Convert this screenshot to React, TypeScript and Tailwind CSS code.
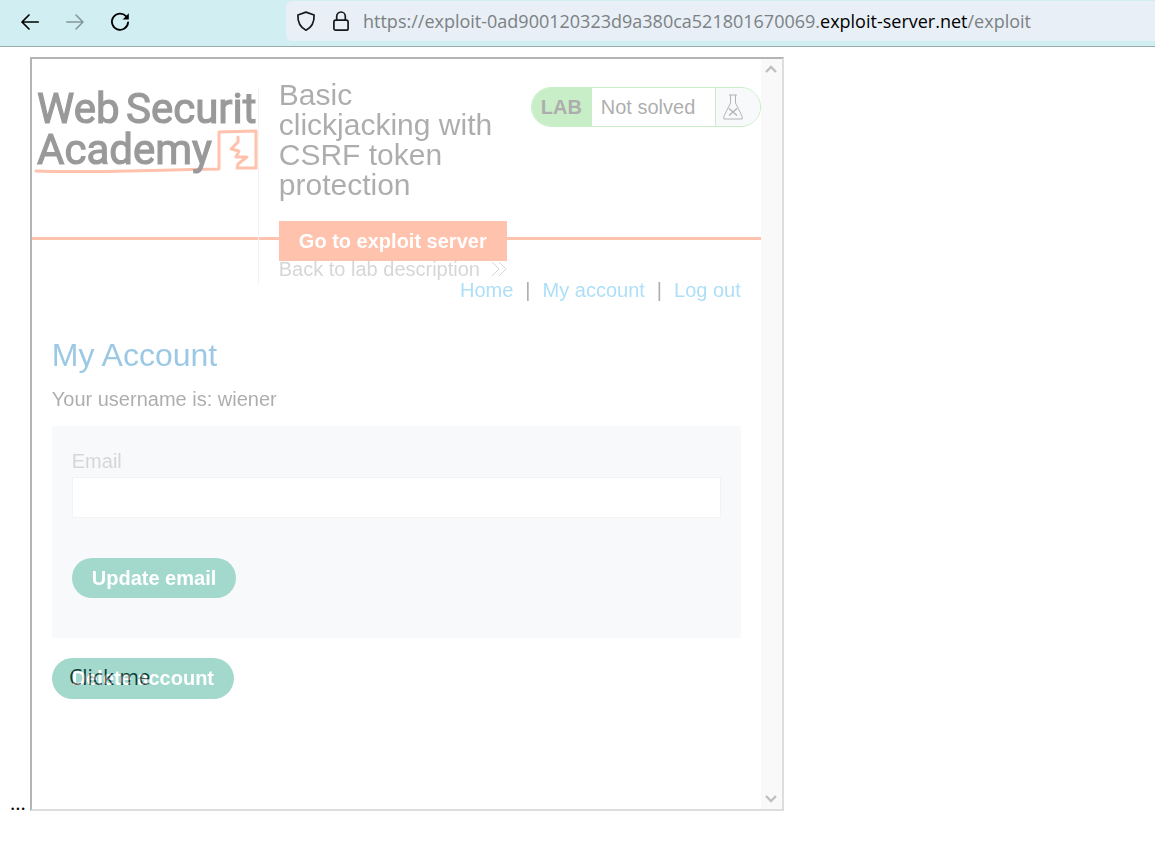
import type { ReactNode } from "react";

function ToolbarButton({ label, disabled, children }: { label: string; disabled?: boolean; children: ReactNode }) {
  return (
    <button type="button" aria-label={label} disabled={disabled} className="flex size-5 items-center justify-center text-black disabled:text-[#849698]">
      {children}
    </button>
  );
}

function BrowserBar() {
  return (
    <header className="flex h-[47px] items-start border-b border-[#9aabae] bg-[#d1eef2]">
      <nav aria-label="Browser" className="flex h-11 w-[286px] shrink-0 items-center gap-[25px] pl-5">
        <ToolbarButton label="Back">
          <svg width="20" height="20" viewBox="0 0 20 20" fill="none" stroke="currentColor" strokeWidth="1.7" strokeLinecap="round" strokeLinejoin="round">
            <path d="M18.2 10H2M9 3 2 10l7 7" />
          </svg>
        </ToolbarButton>
        <ToolbarButton label="Forward" disabled>
          <svg width="20" height="20" viewBox="0 0 20 20" fill="none" stroke="currentColor" strokeWidth="1.5" strokeLinecap="round" strokeLinejoin="round">
            <path d="M1.8 10H18M11 3l7 7-7 7" />
          </svg>
        </ToolbarButton>
        <ToolbarButton label="Reload">
          <svg width="20" height="20" viewBox="0 0 20 20" fill="none" stroke="currentColor" strokeWidth="1.8" strokeLinecap="round">
            <path d="M16 4.2A8.1 8.1 0 1 0 18.1 10.4" />
            <path d="M18.8 1.3v6.2h-6.1z" fill="currentColor" stroke="none" />
          </svg>
        </ToolbarButton>
      </nav>
      <div className="mt-px flex h-10 min-w-0 flex-1 items-center rounded-l-md bg-[#e8eff6] pl-2.5">
        <svg className="shrink-0" width="20" height="22" viewBox="0 0 20 22" fill="none" stroke="#15191b" strokeWidth="1.7" strokeLinejoin="round">
          <path d="M10 2.1 18.1 5c.3 6.9-1.7 12-8.1 15.2C3.6 17 1.6 11.9 1.9 5z" />
        </svg>
        <svg className="ml-[15px] shrink-0" width="20" height="22" viewBox="0 0 20 22" fill="none" stroke="#15191b" strokeWidth="1.7">
          <rect x="2.9" y="10.2" width="14.2" height="10" rx="1.8" />
          <path d="M5.7 10.2V6.3a4.3 4.3 0 0 1 8.6 0v3.9" />
        </svg>
        <p className="ml-3 truncate font-['Open_Sans','Noto_Sans',sans-serif] text-[18px] leading-7 text-[#7c8183]">
          https://exploit-0ad900120323d9a380ca521801670069.<span className="text-black">exploit-server.net</span>/exploit
        </p>
      </div>
    </header>
  );
}

function AcademyLogo() {
  return (
    <svg role="img" aria-label="Web Security Academy" className="block" width="226" height="100" viewBox="0 7 226 100">
      <g fill="none" stroke="#ff6633" strokeWidth="3" strokeLinejoin="round" strokeLinecap="round">
        <path d="M4 91c50 2 110-1 183-2V52l37-1v37l-19 0 1-4 9-7-11 0 3-6-8-2 7-7v-5" />
      </g>
      <g fill="#000" stroke="#000" strokeWidth="1.2" fontSize="42" className="font-['Roboto',sans-serif] font-normal">
        <text x="5" y="43">Web</text>
        <text x="94" y="43">Securit</text>
        <text x="5" y="84">Academy</text>
      </g>
    </svg>
  );
}

function LabStatus() {
  return (
    <div className="mt-[28px] flex h-10 w-[230px] shrink-0 overflow-hidden rounded-full border border-[#73d473] text-[20px] leading-[38px]">
      <strong className="w-[60px] bg-[#73d473] pl-[9px]">LAB</strong>
      <span className="flex-1 bg-white pl-[9px]">Not solved</span>
      <span className="flex w-[45px] items-center border-l border-[#73d473] bg-[#edf0f5] pl-[7px]">
        <svg width="20" height="26" viewBox="0 0 20 26" fill="none" stroke="#444" strokeWidth="1">
          <path d="M6 1h8M7.5 1v8L.8 22.5V25h18.4v-2.5L12.5 9V1" />
          <path d="m6 14.5 8 7m0-7-8 7" strokeWidth="1.5" />
        </svg>
      </span>
    </div>
  );
}

function LabHeader() {
  return (
    <header className="flex h-[181px] items-start border-b-[3px] border-[#ff6633]">
      <div className="mt-[28px] h-[197px] w-[227px] shrink-0 overflow-hidden border-r border-[#e2e2e2]">
        <AcademyLogo />
      </div>
      <div className="mt-[21px] min-w-0 flex-1 pr-6 pl-5">
        <h2 className="text-[30px] leading-[30px]">Basic clickjacking with CSRF token protection</h2>
        <a href="#exploit-server" className="mt-[21px] block h-10 bg-[#ff6633] text-center text-[20px] leading-10 font-bold whitespace-nowrap text-white">
          Go to exploit server
        </a>
        <a href="#lab-description" className="flex items-center justify-between text-[20px] leading-4 whitespace-nowrap text-[#999]">
          Back to lab description
          <svg width="16" height="16" viewBox="0 0 16 16" fill="none" stroke="currentColor" strokeWidth="1">
            <path d="m1 1 7 7-7 7M8 1l7 7-7 7" />
          </svg>
        </a>
      </div>
      <LabStatus />
    </header>
  );
}

function AccountPage() {
  return (
    <div className="min-w-0 flex-1 font-['Liberation_Sans',Arial,sans-serif] text-[20px] leading-5 text-[#333]">
      <LabHeader />
      <main className="px-5">
        <nav aria-label="Account" className="flex justify-end gap-3 pt-10 text-[#33aeea]">
          <a href="#home">Home</a>
          <span className="text-[#333]">|</span>
          <a href="#my-account">My account</a>
          <span className="text-[#333]">|</span>
          <a href="#log-out">Log out</a>
        </nav>
        <h1 className="mt-[35px] text-[32px] leading-10 text-[#0577be]">My Account</h1>
        <p className="mt-3.5">Your username is: wiener</p>
        <form className="mt-[17px] bg-[#edf0f5] px-5 pt-[25px] pb-10" onSubmit={(e) => e.preventDefault()}>
          <label htmlFor="email" className="block text-[#999]">Email</label>
          <input id="email" type="email" className="mt-1.5 block h-[41px] w-full border border-[#e2e2e2] bg-white px-2.5" />
          <button type="submit" className="mt-10 block h-10 rounded-full bg-[#199d82] px-5 font-bold text-white">Update email</button>
        </form>
        <button type="button" className="mt-5 block h-[41px] rounded-full bg-[#199d82] px-5 pb-px font-bold text-white">Delete account</button>
      </main>
    </div>
  );
}

function ScrollBar() {
  return (
    <div aria-hidden="true" className="flex w-[21px] shrink-0 flex-col items-center justify-between bg-[#f0f0f0] py-1.5">
      <svg width="12" height="8" viewBox="0 0 12 8" fill="none" stroke="#606060" strokeWidth="2.4"><path d="m1 7 5-5 5 5" /></svg>
      <svg width="12" height="8" viewBox="0 0 12 8" fill="none" stroke="#606060" strokeWidth="2.4"><path d="m1 1 5 5 5-5" /></svg>
    </div>
  );
}

export default function App() {
  return (
    <div className="min-h-screen bg-white">
      <BrowserBar />
      <div className="relative isolate flex items-end gap-1 p-2.5 font-['Open_Sans','Noto_Sans',sans-serif] text-[20px] text-black">
        <div className="absolute top-[616px] left-[69px] -z-10 text-[21px] leading-7">Click me</div>
        <span className="leading-4">...</span>
        <section aria-label="My account" className="flex min-h-[754px] max-w-[754px] min-w-0 flex-1 border-2 border-t-[#454545] border-r-[#aaa] border-b-[#aaa] border-l-[#454545] opacity-40">
          <AccountPage />
          <ScrollBar />
        </section>
      </div>
    </div>
  );
}
